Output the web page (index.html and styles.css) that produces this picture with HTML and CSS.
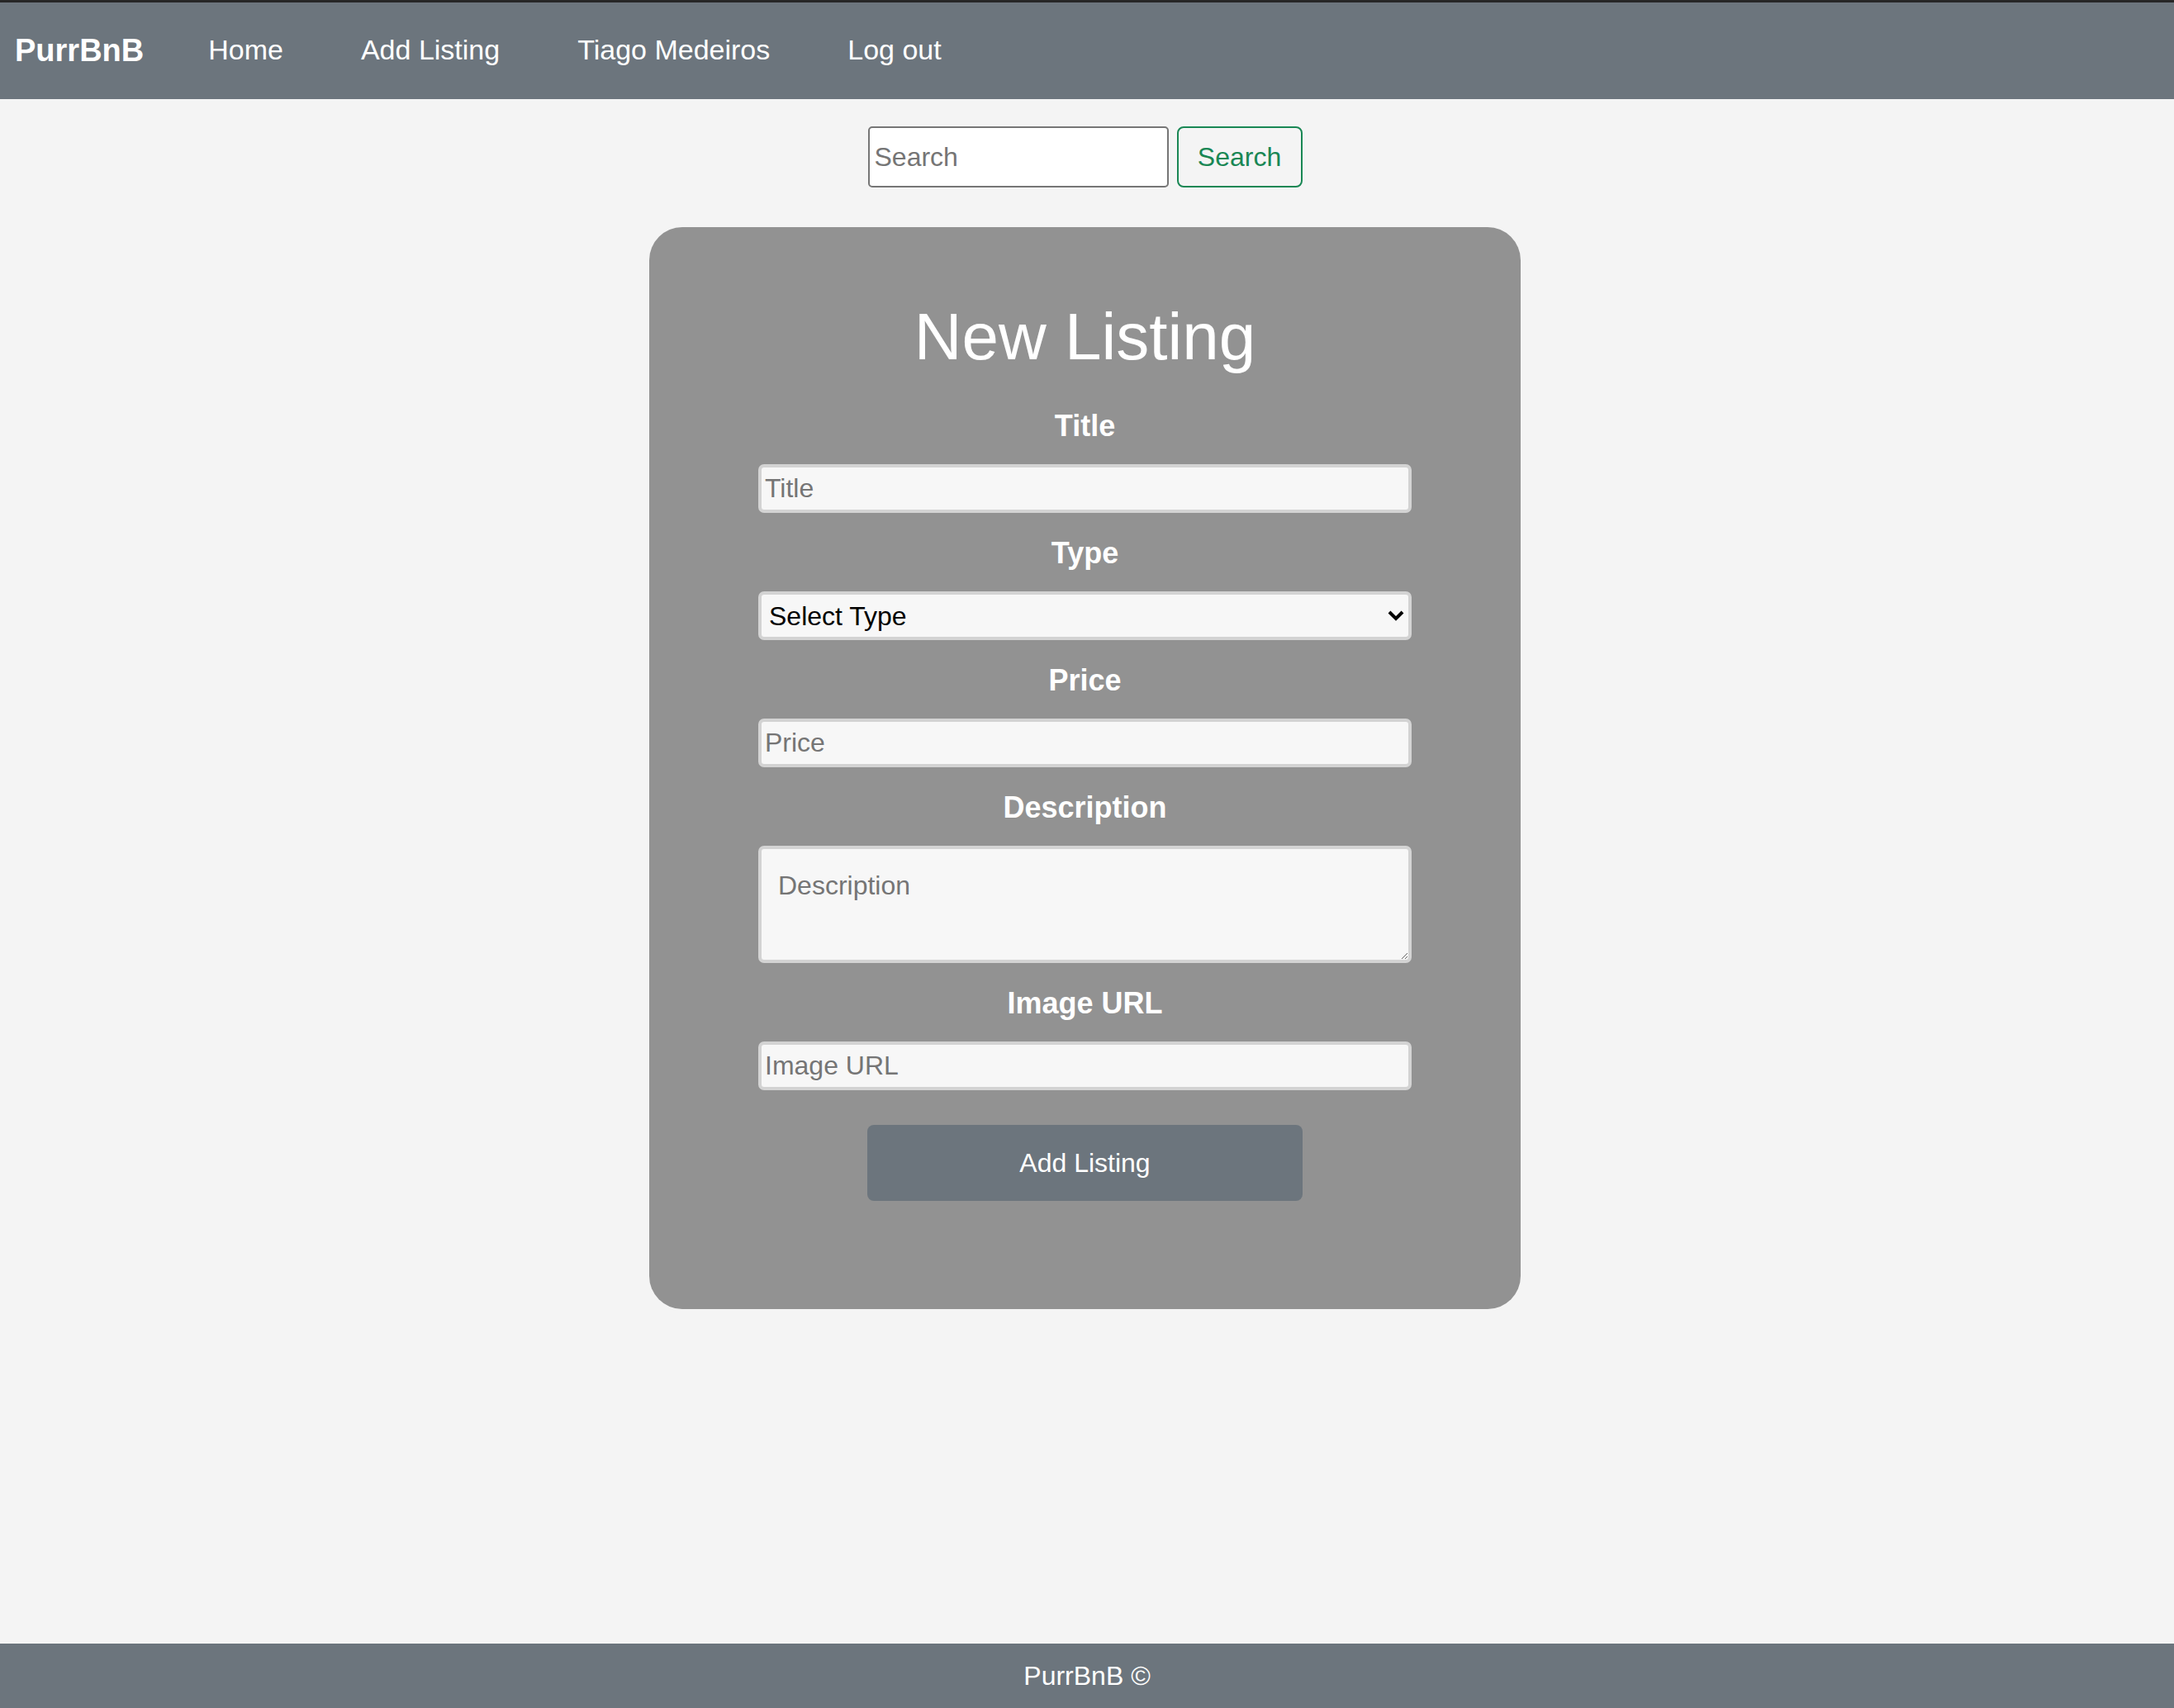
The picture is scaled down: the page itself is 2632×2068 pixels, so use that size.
FILE: index.html
```html
<!DOCTYPE html>
<html lang="en">
<head>
<meta charset="utf-8">
<title>PurrBnB - New Listing</title>
<link rel="stylesheet" href="styles.css">
</head>
<body>
<nav class="navbar">
  <a class="brand" href="#">PurrBnB</a>
  <ul class="nav-links">
    <li><a href="#">Home</a></li>
    <li><a href="#">Add Listing</a></li>
    <li><a href="#">Tiago Medeiros</a></li>
    <li><a href="#">Log out</a></li>
  </ul>
</nav>

<main class="main">
  <form class="search">
    <input class="search-input" type="text" placeholder="Search">
    <button class="search-btn" type="button">Search</button>
  </form>

  <section class="card">
    <h1 class="card-title">New Listing</h1>
    <form class="listing-form">
      <label class="field-label" for="title">Title</label>
      <input class="field" id="title" type="text" placeholder="Title">

      <label class="field-label" for="type">Type</label>
      <div class="select-wrap">
        <select class="field select" id="type">
          <option>Select Type</option>
        </select>
        <svg class="chevron" width="20" height="13" viewBox="0 0 20 13"><path d="M2 2 L10 10 L18 2" fill="none" stroke="#000" stroke-width="4"/></svg>
      </div>

      <label class="field-label" for="price">Price</label>
      <input class="field" id="price" type="text" placeholder="Price">

      <label class="field-label" for="desc">Description</label>
      <textarea class="field textarea" id="desc" placeholder="Description"></textarea>

      <label class="field-label" for="img">Image URL</label>
      <input class="field" id="img" type="text" placeholder="Image URL">

      <button class="submit-btn" type="button">Add Listing</button>
    </form>
  </section>
</main>

<footer class="footer">PurrBnB ©</footer>
</body>
</html>
```
FILE: styles.css
```css
* { box-sizing: border-box; }

html, body { margin: 0; padding: 0; }

body {
  background: #f4f4f4;
  font-family: "Liberation Sans", Arial, sans-serif;
  min-height: 100vh;
  display: flex;
  flex-direction: column;
}

.navbar {
  border-top: 3px solid #262626;
  height: 120px;
  background: #6c757d;
  display: flex;
  align-items: center;
  padding-left: 18px;
}

.brand {
  color: #fff;
  font-weight: bold;
  font-size: 38px;
  text-decoration: none;
}

.nav-links {
  list-style: none;
  margin: -2px 0 0 78px;
  padding: 0;
  display: flex;
  gap: 94px;
}

.nav-links a {
  color: #fff;
  font-size: 34px;
  text-decoration: none;
}

.main {
  display: flex;
  flex-direction: column;
  align-items: center;
  padding-right: 5px;
}

.search {
  margin-top: 33px;
  display: flex;
  gap: 10px;
}

.search-input {
  width: 364px;
  height: 74px;
  border: 2px solid #767676;
  border-radius: 5px;
  background: #fff;
  padding: 0 6px;
  font-family: inherit;
  font-size: 32px;
}

.search-input::placeholder { color: #757575; }

.search-btn {
  width: 152px;
  height: 74px;
  border: 2px solid #198754;
  border-radius: 8px;
  background: transparent;
  color: #198754;
  font-family: inherit;
  font-size: 32px;
}

.card {
  margin-top: 48px;
  width: 1055px;
  background: #929292;
  border-radius: 40px;
  padding: 85px 132px 131px;
}

.card-title {
  margin: 0 0 11px;
  text-align: center;
  color: #fff;
  font-weight: normal;
  font-size: 80px;
  line-height: 96px;
}

.listing-form {
  display: flex;
  flex-direction: column;
}

.field-label {
  display: block;
  margin: 27px 0 24px;
  text-align: center;
  color: #fff;
  font-weight: bold;
  font-size: 36px;
  line-height: 44px;
}

.field {
  width: 100%;
  height: 59px;
  border: 4px solid #d3d3d3;
  border-radius: 7px;
  background: #f7f7f7;
  padding: 0 4px;
  font-family: inherit;
  font-size: 32px;
  color: #000;
}

.field::placeholder { color: #757575; }

.select-wrap {
  position: relative;
}

.select {
  appearance: none;
  -webkit-appearance: none;
  padding-left: 9px;
  display: block;
}

.chevron {
  position: absolute;
  right: 9px;
  top: 23px;
  pointer-events: none;
}

.textarea {
  height: 142px;
  padding: 20px;
  line-height: 1.5;
  resize: vertical;
  display: block;
}

.submit-btn {
  align-self: center;
  margin-top: 42px;
  width: 527px;
  height: 92px;
  border: none;
  border-radius: 8px;
  background: #6c757d;
  color: #fff;
  font-family: inherit;
  font-size: 32px;
}

.footer {
  margin-top: auto;
  height: 78px;
  background: #6c757d;
  color: #fff;
  font-size: 32px;
  display: flex;
  align-items: center;
  justify-content: center;
}
```
